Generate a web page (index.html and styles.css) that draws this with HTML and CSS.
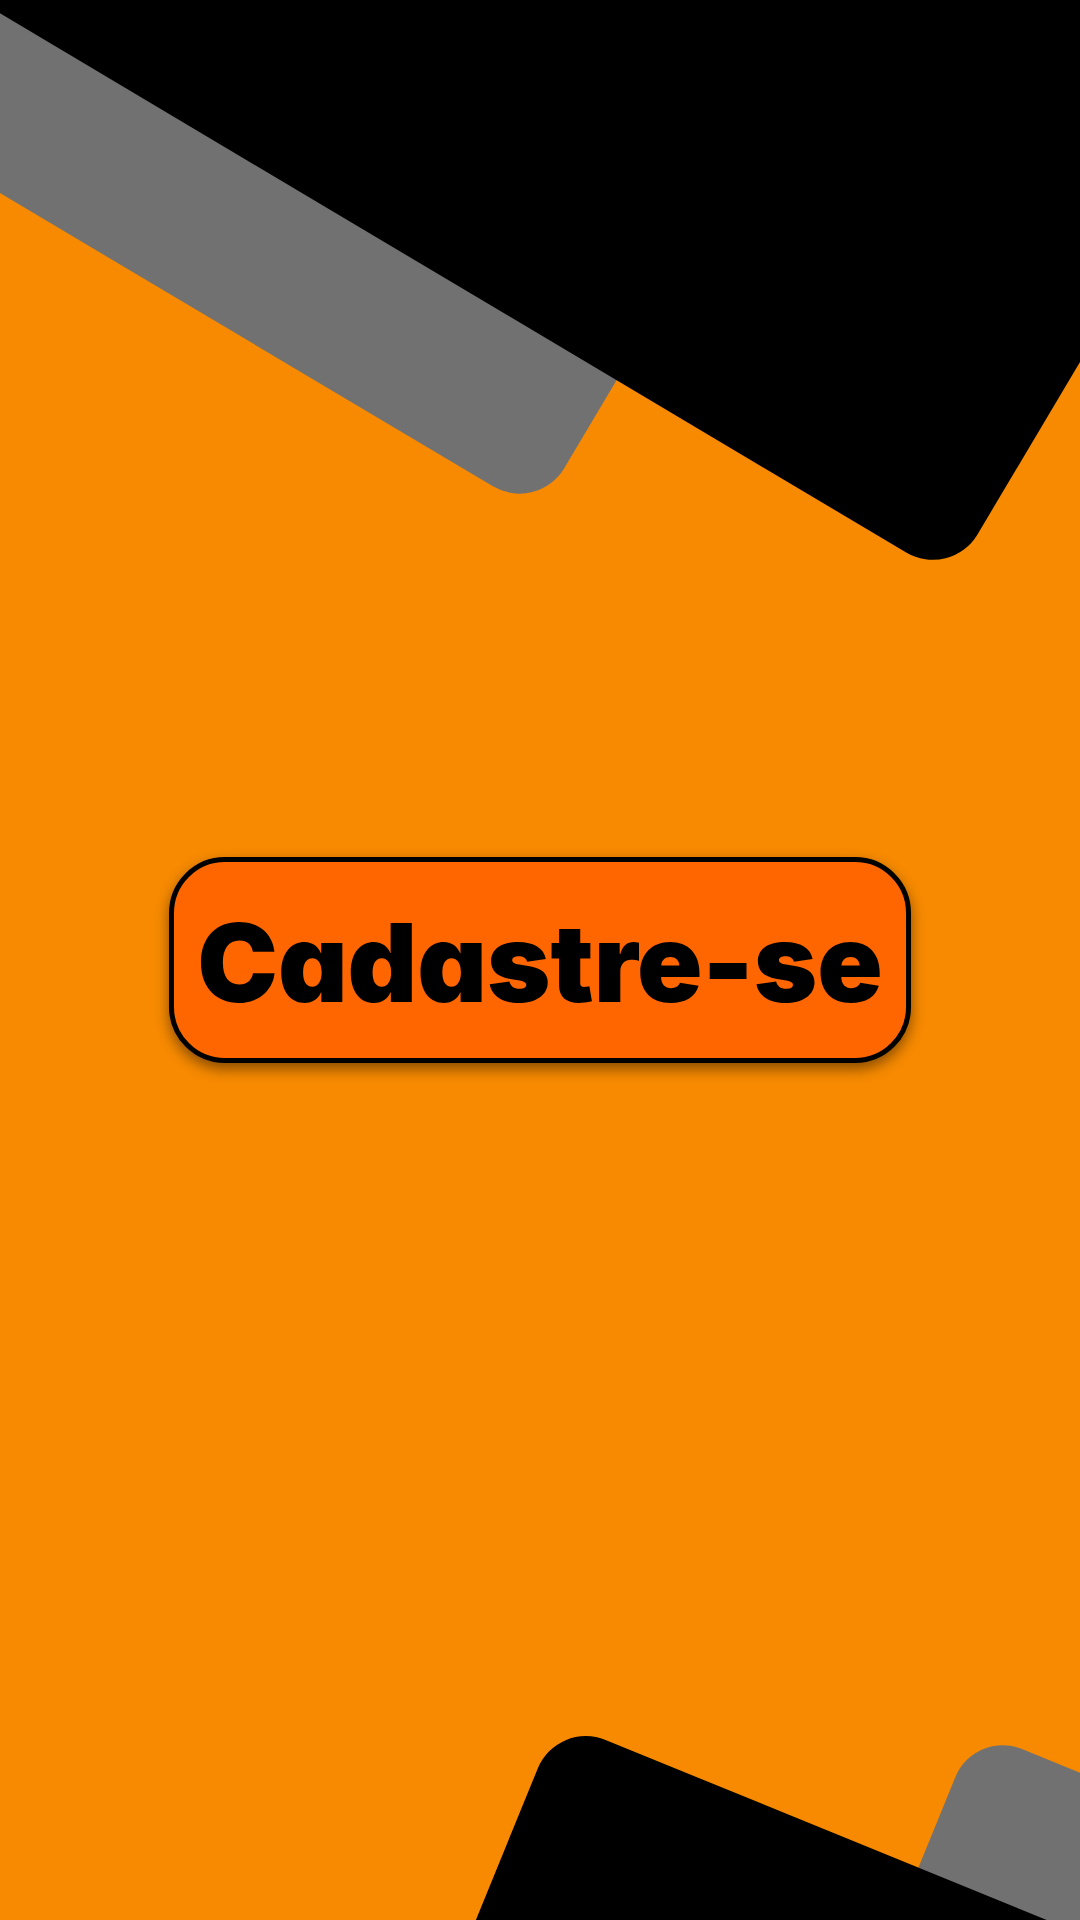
FILE: index.html
```html
<!DOCTYPE html>
<html lang="pt-BR">
<head>
<meta charset="utf-8">
<title>Cadastre-se</title>
<link rel="stylesheet" href="styles.css">
</head>
<body>
<main class="screen">
  <svg class="decor" width="1080" height="1920" viewBox="0 0 1080 1920" aria-hidden="true">
    <g transform="translate(537.6 512.9) rotate(30.75)">
      <rect class="shape-gray" x="-3000" y="-3000" width="3000" height="3000" rx="52" ry="52"/>
    </g>
    <g transform="translate(950.9 579.1) rotate(30.75)">
      <rect class="shape-black" x="-3000" y="-3000" width="3000" height="3000" rx="52" ry="52"/>
    </g>
    <g transform="translate(974.7 1729.7) rotate(22.2)">
      <rect class="shape-gray" x="0" y="0" width="3000" height="3000" rx="51" ry="51"/>
    </g>
    <g transform="translate(557.4 1720.3) rotate(22.2)">
      <rect class="shape-black" x="0" y="0" width="3000" height="3000" rx="52" ry="52"/>
    </g>
  </svg>
  <button class="signup-btn" type="button">Cadastre-se</button>
</main>
</body>
</html>
```

FILE: styles.css
```css
html, body {
  margin: 0;
  padding: 0;
}

body {
  width: 1080px;
  height: 1920px;
  overflow: hidden;
  background: #f78a00;
}

.screen {
  position: relative;
  width: 1080px;
  height: 1920px;
  overflow: hidden;
  background: #f78a00;
  display: flex;
  align-items: center;
  justify-content: center;
}

.decor {
  position: absolute;
  left: 0;
  top: 0;
  display: block;
}

.shape-gray {
  fill: #717171;
}

.shape-black {
  fill: #000000;
}

.signup-btn {
  position: relative;
  box-sizing: border-box;
  width: 742px;
  height: 206px;
  margin: 0;
  padding: 6px 0 0 0;
  background: #ff6600;
  border: 5px solid #000;
  border-radius: 56px;
  box-shadow: 0 6px 14px rgba(0, 0, 0, 0.45);
  color: #000;
  font-family: Inter, "Noto Sans", sans-serif;
  font-weight: 900;
  font-size: 108px;
  font-feature-settings: "cv11" 1;
  letter-spacing: 0;
  line-height: 1;
  display: flex;
  align-items: center;
  justify-content: center;
  cursor: pointer;
}
```
